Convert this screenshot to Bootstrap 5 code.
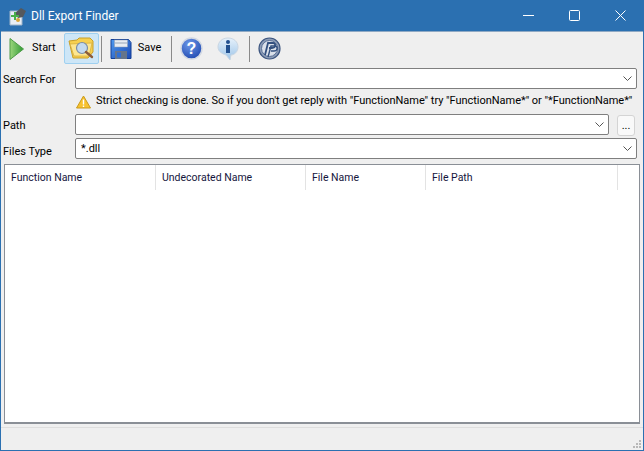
<!DOCTYPE html>
<html lang="en">
<head>
    <meta charset="UTF-8">
    <meta name="viewport" content="width=device-width, initial-scale=1">
    <title>Dll Export Finder</title>
    <link href="https://cdn.jsdelivr.net/npm/bootstrap@5.3.0/dist/css/bootstrap.min.css" rel="stylesheet">
    <script src="https://cdn.jsdelivr.net/npm/bootstrap@5.3.0/dist/js/bootstrap.bundle.min.js"></script>
    <style>
        html, body { height: 100%; overflow: hidden; }
        body {
            background: #2b70b1;
            font-family: Roboto, "Liberation Sans", sans-serif;
            font-size: 11px;
            color: #000;
        }
        .app-window { width: 644px; height: 451px; padding: 0 1px 2px 1px; }
        .title-strip { height: 31px; color: #fff; font-size: 12px; padding-left: 8px; }
        .win-btn { width: 46px; height: 30px; }
        .client-area { background: #efefef; border-top: 1px solid #8fa9c4; }
        .tool-strip { height: 32px; padding: 1px 0 0 3px; }
        .tool-btn { height: 31px; padding: 0 3px; border: 1px solid transparent; border-radius: 2px; color: #000; }
        .tool-btn.picked { background: #cde6f7; border-color: #9fd0f0; }
        .tool-sep { width: 1px; height: 26px; background: #8a8a8a; margin: 0 4px 0 2px; }
        .tool-sep.wide-left { margin-left: 6px; }
        .tool-btn.wide-left { margin-left: 6px; }
        .icon-gap { margin-right: 7px; }
        .field-row { height: 21px; padding-right: 6px; flex-shrink: 0; }
        .field-row.with-btn { padding-right: 8px; }
        .row-gap { margin-top: 3px; }
        .field-label { width: 74px; padding-left: 2px; line-height: 23px; }
        .label-low { line-height: 27px; }
        .combo-box {
            height: 21px; background: #fff; border: 1px solid #7f7f7f; border-radius: 2px;
            padding: 0 4px 0 5px; line-height: 17px;
        }
        .dots-btn {
            width: 18px; height: 21px; margin-top: 1px; background: #f9f9f9; border: 1px solid #d4d4d4; border-radius: 3px;
            line-height: 20px; text-align: center; color: #000;
        }
        .hint-row { height: 25px; padding-left: 75px; flex-shrink: 0; }
        .hint-text { letter-spacing: -0.03px; }
        .hint-icon { margin-right: 5px; flex-shrink: 0; }
        .result-grid { margin: 5px 3px 0 3px; height: 260px; background: #fff; border: 1px solid #8a8f96; border-bottom-width: 2px; flex-shrink: 0; }
        .grid-head { height: 25px; color: #15153d; font-size: 10.5px; }
        .head-cell { border-right: 1px solid #e3e3e3; height: 25px; line-height: 26px; padding-left: 6px; }
        .status-strip { margin-top: 3px; height: 23px; border-top: 1px solid #dedede; padding: 0 2px 2px 0; }
    </style>
</head>
<body>

<div class="app-window d-flex flex-column">
    <div class="title-strip d-flex align-items-center flex-shrink-0">
        <svg width="18" height="20" viewBox="0 0 18 20" class="me-1 flex-shrink-0">
            <path d="M1 5h12v14H1z" fill="#e8eef5" stroke="#9fb4c9"/>
            <path d="M6 7l6-5 5 3-3 6-5 1z" fill="#55585c"/>
            <path d="M2 9h3V6h2v3h3v2H7v3H5v-3H2z" fill="#49b04a"/>
            <circle cx="9" cy="14" r="2" fill="#d9a53a"/>
        </svg>
        <span class="flex-grow-1">Dll Export Finder</span>
        <div class="win-btn d-flex align-items-center justify-content-center">
            <svg width="11" height="11" viewBox="0 0 11 11"><path d="M0 5.500h11" stroke="#fff" fill="none"/></svg>
        </div>
        <div class="win-btn d-flex align-items-center justify-content-center">
            <svg width="11" height="11" viewBox="0 0 11 11"><rect x=".5" y=".5" width="10" height="10" rx="1" stroke="#fff" fill="none"/></svg>
        </div>
        <div class="win-btn d-flex align-items-center justify-content-center">
            <svg width="11" height="11" viewBox="0 0 11 11"><path d="M.5.500l10 10M10.500.500l-10 10" stroke="#fff" fill="none"/></svg>
        </div>
    </div>

    <div class="client-area flex-grow-1 d-flex flex-column">
        <div class="tool-strip d-flex align-items-center">
            <div class="tool-btn d-flex align-items-center">
                <svg width="17" height="24" viewBox="0 0 17 24" class="icon-gap">
                    <defs><linearGradient id="startFill" x1="0" x2="1" y1="0" y2="0"><stop offset="0" stop-color="#9bd67c"/><stop offset="1" stop-color="#2f9a35"/></linearGradient></defs>
                    <path d="M2 1.500L15.500 12 2 22.500z" fill="url(#startFill)" stroke="#4c9b47"/>
                </svg>
                <span>Start</span>
            </div>
            <div class="tool-btn picked d-flex align-items-center ms-1">
                <svg width="27" height="25" viewBox="0 0 27 25">
                    <path d="M1 5l8-1 2-2 11 0 3 3v11l-5 6H5z" fill="#f7d04f" stroke="#c99f2a"/>
                    <path d="M2 8l22-1-3 13H6z" fill="#fde68f" stroke="#d2aa36" stroke-width=".7"/>
                    <circle cx="14" cy="12" r="5.500" fill="#c3daf0" stroke="#7d8ea3" stroke-width="1.200"/>
                    <path d="M18 16l6 5" stroke="#8d5d3a" stroke-width="2.400" stroke-linecap="round"/>
                </svg>
            </div>
            <div class="tool-sep"></div>
            <div class="tool-btn d-flex align-items-center">
                <svg width="22" height="24" viewBox="0 0 22 24" style="margin-right:6px">
                    <defs><linearGradient id="diskFill" x1="0" x2="1" y1="0" y2="1"><stop offset="0" stop-color="#4f9bf0"/><stop offset="1" stop-color="#1c49b4"/></linearGradient></defs>
                    <path d="M1 2.500h17.500l2.500 3v16H1z" fill="url(#diskFill)" stroke="#123f96"/>
                    <rect x="4.500" y="3" width="13" height="7" fill="#e8edf3" stroke="#8e9bb0" stroke-width=".5"/>
                    <path d="M5 6h12" stroke="#9aa7b8"/>
                    <rect x="5" y="14" width="12" height="8" fill="#66758a"/>
                    <rect x="7" y="15.500" width="4" height="5" fill="#2f6fd6"/>
                </svg>
                <span>Save</span>
            </div>
            <div class="tool-sep wide-left"></div>
            <div class="tool-btn d-flex align-items-center">
                <svg width="23" height="23" viewBox="0 0 23 23">
                    <defs><radialGradient id="helpFill" cx=".4" cy=".3" r=".8"><stop offset="0" stop-color="#6d97e8"/><stop offset="1" stop-color="#1b45ad"/></radialGradient></defs>
                    <circle cx="11.500" cy="11.500" r="10.500" fill="url(#helpFill)" stroke="#d3d9e3" stroke-width="1.500"/>
                    <text x="11.500" y="17" text-anchor="middle" font-family="Liberation Sans" font-size="16" font-weight="700" fill="#fff">?</text>
                </svg>
            </div>
            <div class="tool-btn wide-left d-flex align-items-center">
                <svg width="22" height="24" viewBox="0 0 22 24">
                    <defs><linearGradient id="tipFill" x1="0" x2="0" y1="0" y2="1"><stop offset="0" stop-color="#e6f1fb"/><stop offset="1" stop-color="#9cc4e8"/></linearGradient></defs>
                    <path d="M11 1c6 0 10 4 10 9s-4 8-7 8l-1 5-4-5c-3-1-8-3-8-8s4-9 10-9z" fill="url(#tipFill)" stroke="#c9d6e3"/>
                    <circle cx="11" cy="5" r="2" fill="#22508f"/>
                    <path d="M9 8h4v8H9z" fill="#22508f"/>
                </svg>
            </div>
            <div class="tool-sep wide-left"></div>
            <div class="tool-btn d-flex align-items-center">
                <svg width="23" height="23" viewBox="0 0 23 23">
                    <circle cx="11.500" cy="11.500" r="10.500" fill="#8c9cb6" stroke="#3d5680" stroke-width="1.200"/>
                    <circle cx="11.500" cy="11.500" r="8" fill="#dbe1ea" stroke="#5a7097"/>
                    <path d="M7 18l3-12h5c3 0 3 5-1 5h-3" fill="none" stroke="#33507f" stroke-width="1.800"/>
                    <path d="M10 20l3-11h4c3 0 3 5-1 5h-3" fill="none" stroke="#33507f" stroke-width="1.400"/>
                </svg>
            </div>
        </div>

        <div class="field-row d-flex align-items-start mt-1">
            <div class="field-label">Search For</div>
            <div class="combo-box flex-grow-1 d-flex align-items-center justify-content-end">
                <svg width="9" height="5" viewBox="0 0 9 5"><path d="M.5.500l4 4 4-4" fill="none" stroke="#555"/></svg>
            </div>
        </div>
        <div class="hint-row d-flex align-items-center">
            <svg width="15" height="14" viewBox="0 0 15 14" class="hint-icon">
                <path d="M7.500 1L14.500 13H.5z" fill="#f8c22e" stroke="#c99a1c" stroke-linejoin="round"/>
                <path d="M7.500 4.500v5M7.500 10.500v1.500" stroke="#fff" stroke-width="1.400"/>
            </svg>
            <span class="hint-text text-nowrap">Strict checking is done. So if you don't get reply with "FunctionName" try "FunctionName*" or "*FunctionName*"</span>
        </div>
        <div class="field-row with-btn d-flex align-items-start">
            <div class="field-label">Path</div>
            <div class="combo-box flex-grow-1 d-flex align-items-center justify-content-end">
                <svg width="9" height="5" viewBox="0 0 9 5"><path d="M.5.500l4 4 4-4" fill="none" stroke="#555"/></svg>
            </div>
            <div class="dots-btn ms-2">...</div>
        </div>
        <div class="field-row row-gap d-flex align-items-start">
            <div class="field-label label-low">Files Type</div>
            <div class="combo-box flex-grow-1 d-flex align-items-center justify-content-between">
                <span>*.dll</span>
                <svg width="9" height="5" viewBox="0 0 9 5"><path d="M.5.500l4 4 4-4" fill="none" stroke="#555"/></svg>
            </div>
        </div>

        <div class="result-grid">
            <div class="grid-head d-flex">
                <div class="head-cell" style="width:151px">Function Name</div>
                <div class="head-cell" style="width:150px">Undecorated Name</div>
                <div class="head-cell" style="width:120px">File Name</div>
                <div class="head-cell" style="width:192px">File Path</div>
            </div>
        </div>

        <div class="status-strip d-flex justify-content-end align-items-end">
            <svg width="8" height="8" viewBox="0 0 8 8" fill="#b8b8b8">
                <rect x="6" y="0" width="2" height="2"/><rect x="3" y="3" width="2" height="2"/><rect x="6" y="3" width="2" height="2"/>
                <rect x="0" y="6" width="2" height="2"/><rect x="3" y="6" width="2" height="2"/><rect x="6" y="6" width="2" height="2"/>
            </svg>
        </div>
    </div>
</div>

</body>
</html>
